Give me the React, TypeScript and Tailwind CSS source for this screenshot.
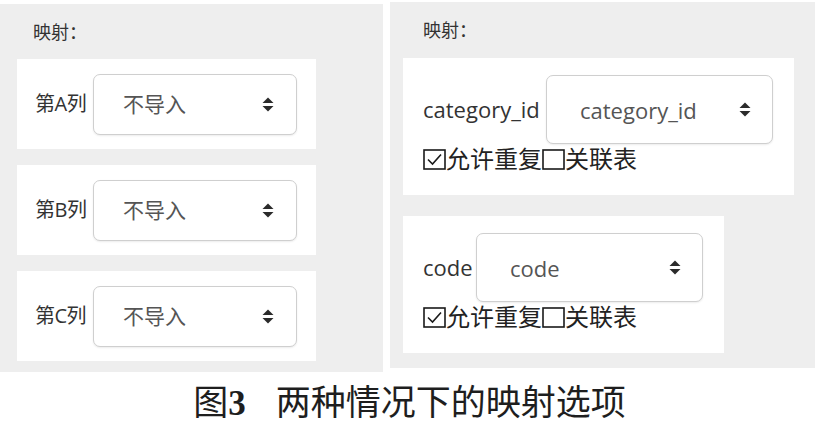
import React from 'react';

const SANS = { fontFamily: '"Open Sans", "Noto Sans CJK SC", sans-serif' };
const SERIF = { fontFamily: '"Liberation Serif", "Noto Sans CJK SC", serif' };

function SortIcon() {
  return (
    <svg width="12" height="15" viewBox="0 0 12 15" className="shrink-0">
      <path d="M6 0.5 L11.5 6 H0.5 Z" fill="#2b2b2b" />
      <path d="M6 14.5 L11.5 9 H0.5 Z" fill="#2b2b2b" />
    </svg>
  );
}

function Box({ checked }: { checked: boolean }) {
  return (
    <svg width="23" height="21" viewBox="0 0 23 21" className="shrink-0">
      <rect x="1" y="1" width="21" height="19" fill="none" stroke="#1a1a1a" strokeWidth="1.6" />
      {checked && <path d="M5 10.5 L9.5 15 L18 5.5" fill="none" stroke="#1a1a1a" strokeWidth="1.6" />}
    </svg>
  );
}

function Select({ value, className, textSize, padL, padR }: { value: string; className: string; textSize: string; padL: string; padR: string }) {
  return (
    <div className={`flex items-center justify-between bg-white border border-[#cfcfcf] rounded-[7px] shadow-[0_1px_2px_rgba(0,0,0,0.08)] ${className} ${padL} ${padR}`}>
      <span className={`${textSize} text-[#555] leading-none`}>{value}</span>
      <SortIcon />
    </div>
  );
}

function LeftCard({ col }: { col: string }) {
  return (
    <div className="w-[299px] h-[90px] bg-white flex items-center pl-[18px]">
      <span className="text-[20px] text-[#333] w-[58px] whitespace-nowrap tracking-[-0.5px]">第{col}列</span>
      <Select value="不导入" className="w-[204px] h-[61px]" textSize="text-[21px]" padL="pl-[29px]" padR="pr-[22px]" />
    </div>
  );
}

function RightCard({ label, width, labelW }: { label: string; width: string; labelW: string }) {
  return (
    <div className={`${width} h-[137px] bg-white pt-[17px] pl-[20px]`}>
      <div className="flex items-center">
        <span className={`text-[22px] text-[#333] ${labelW} whitespace-nowrap`}>{label}</span>
        <Select value={label} className="w-[227px] h-[69px]" textSize="text-[22px]" padL="pl-[33px]" padR="pr-[21px]" />
      </div>
      <div className="flex items-center h-[30px] text-[24px] text-[#222] leading-none">
        <Box checked />
        <span>允许重复</span>
        <Box checked={false} />
        <span>关联表</span>
      </div>
    </div>
  );
}

export default function App() {
  return (
    <div className="w-[829px] h-[433px] bg-white flex flex-col" style={SANS}>
      <div className="flex gap-[7px]">
        {/* left: no header row */}
        <div className="w-[383px] h-[368px] mt-[4px] bg-[#eeeeee] pl-[17px] pt-[16px]">
          <div className="text-[18px] text-[#333] leading-[24px] pl-[16px]">映射：</div>
          <div className="flex flex-col gap-[16px] mt-[15px]">
            <LeftCard col="A" />
            <LeftCard col="B" />
            <LeftCard col="C" />
          </div>
        </div>

        {/* right: header row */}
        <div className="w-[425px] h-[366px] mt-[2px] bg-[#eeeeee] pl-[13px] pt-[16px]">
          <div className="text-[18px] text-[#333] leading-[24px] pl-[20px]">映射：</div>
          <div className="flex flex-col gap-[21px] mt-[16px]">
            <RightCard label="category_id" width="w-[391px]" labelW="w-[123px]" />
            <RightCard label="code" width="w-[321px]" labelW="w-[53px]" />
          </div>
        </div>
      </div>

      <div className="flex-1 flex items-center justify-center pr-[10px] pt-[2px]" style={SERIF}>
        <span className="text-[35px] text-[#1e1e1e] leading-none">
          图<span className="font-bold">3</span>
          <span className="ml-[30px]">两种情况下的映射选项</span>
        </span>
      </div>
    </div>
  );
}
